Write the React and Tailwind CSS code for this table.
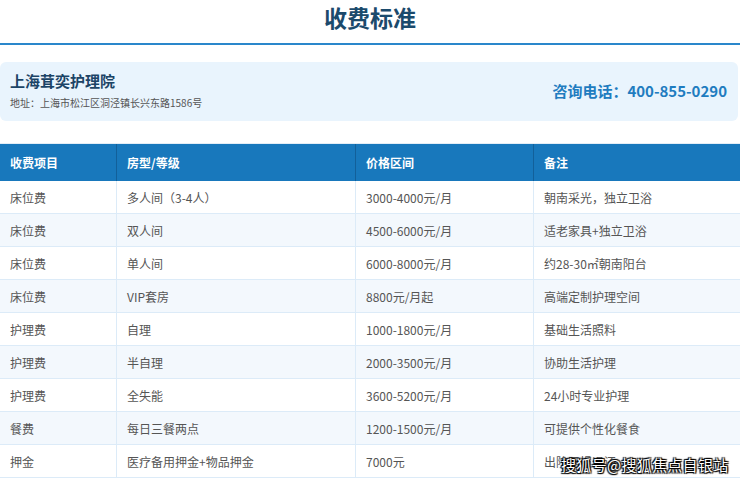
import React from 'react';

const rows = [
  ['床位费', '多人间（3-4人）', '3000-4000元/月', '朝南采光，独立卫浴'],
  ['床位费', '双人间', '4500-6000元/月', '适老家具+独立卫浴'],
  ['床位费', '单人间', '6000-8000元/月', '约28-30㎡朝南阳台'],
  ['床位费', 'VIP套房', '8800元/月起', '高端定制护理空间'],
  ['护理费', '自理', '1000-1800元/月', '基础生活照料'],
  ['护理费', '半自理', '2000-3500元/月', '协助生活护理'],
  ['护理费', '全失能', '3600-5200元/月', '24小时专业护理'],
  ['餐费', '每日三餐两点', '1200-1500元/月', '可提供个性化餐食'],
  ['押金', '医疗备用押金+物品押金', '7000元', '出院无损退还'],
];

const cols = 'grid grid-cols-[117px_239px_178px_1fr]';

const App = () => {
  return (
    <div
      className="w-[740px] h-[480px] overflow-hidden bg-white relative"
      style={{ fontFamily: '"Noto Sans CJK SC", "Liberation Sans", sans-serif' }}
    >
      {/* Title */}
      <div className="h-[45px] flex items-center justify-center border-b-2 border-[#2a87cb]">
        <h1 className="text-[23px] font-bold text-[#1b4a6c] leading-none -mt-2">收费标准</h1>
      </div>

      {/* Info card */}
      <div className="mt-[17px] mr-[2px] h-[59px] rounded-md bg-[#e9f4fd] px-[10px] flex items-center justify-between">
        <div className="flex flex-col">
          <div className="text-[15px] font-bold text-[#1c4466] leading-[20px] -mt-[2px]">上海茸奕护理院</div>
          <div className="text-[10px] text-[#555] leading-[14px] mt-[5px]">地址：上海市松江区洞泾镇长兴东路1586号</div>
        </div>
        <div className="text-[15px] font-bold text-[#1f7cc0] mr-[1px]">咨询电话：400-855-0290</div>
      </div>

      {/* Table */}
      <div className="mt-[22px] border-t border-[#e3edf6]">
        <div className={`${cols} h-[37px] bg-[#1878bc] text-white text-[12px] font-bold`}>
          {['收费项目', '房型/等级', '价格区间', '备注'].map((h, i) => (
            <div
              key={h}
              className={`flex items-center pl-[10px] ${i < 3 ? 'border-r border-[#12609a]' : ''}`}
            >
              {h}
            </div>
          ))}
        </div>
        {rows.map((r, ri) => (
          <div
            key={ri}
            className={`${cols} h-[33px] text-[12px] text-[#555] border-b border-[#dcebf8] ${
              ri % 2 === 1 ? 'bg-[#f3f8fd]' : 'bg-white'
            }`}
          >
            {r.map((c, ci) => (
              <div
                key={ci}
                className={`flex items-center pl-[10px] pt-[1px] ${ci < 3 ? 'border-r border-[#dcebf8]' : ''}`}
              >
                {c}
              </div>
            ))}
          </div>
        ))}
      </div>

      {/* Watermark */}
      <div
        className="absolute left-[561px] top-[454px] text-[15px] text-white tracking-[0.3px]"
        style={{ textShadow: '0 0 1px #000, 1px 1px 1px #000, -1px -1px 1px #000, 1px -1px 1px #000, -1px 1px 1px #000' }}
      >
        搜狐号@搜狐焦点自银站
      </div>
    </div>
  );
};

export default App;
